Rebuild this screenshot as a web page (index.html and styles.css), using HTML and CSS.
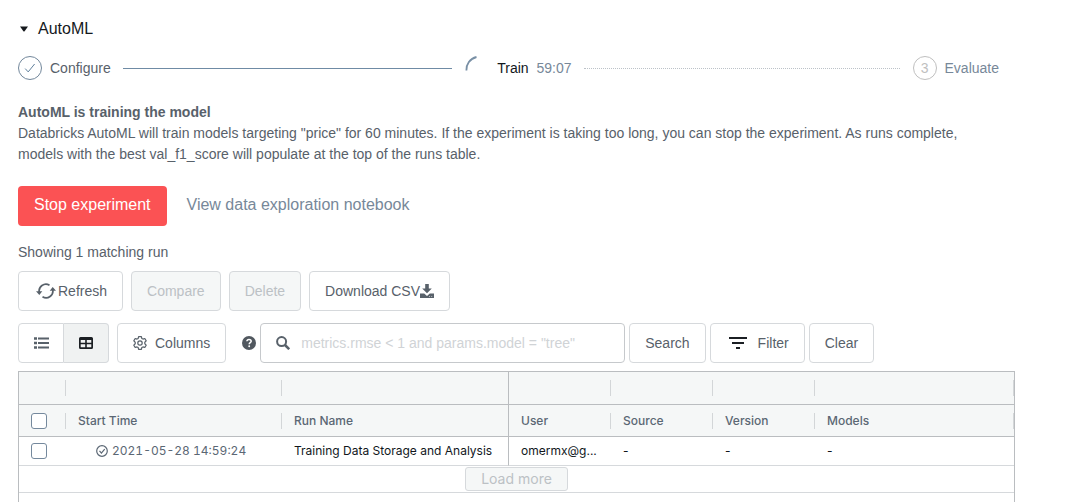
FILE: index.html
```html
<!DOCTYPE html>
<html lang="en">
<head>
<meta charset="utf-8">
<title>AutoML</title>
<link rel="stylesheet" href="styles.css">
</head>
<body>
<main class="page">
  <h1 class="title">
    <svg class="caret" viewBox="0 0 10 6" aria-hidden="true"><path d="M1 .5h8L5.6 5.2q-.6.7-1.2 0z" fill="currentColor"/></svg>
    AutoML
  </h1>

  <ol class="steps">
    <li class="step step-done">
      <span class="step-icon"><svg viewBox="0 0 12 12" width="12" height="12" aria-hidden="true"><path d="M1.200 6.600l3 3.300L10.600 2" fill="none" stroke="currentColor"/></svg></span>
      <span class="step-label">Configure</span>
    </li>
    <li class="step step-active">
      <svg class="spinner" viewBox="0 0 24 24" aria-hidden="true"><path d="M1.400 14.500C1 8.500 5 2.500 11.500 1" fill="none" stroke="currentColor" stroke-width="1.800"/></svg>
      <span class="step-label">Train <span class="time">59:07</span></span>
    </li>
    <li class="step step-wait">
      <span class="step-icon">3</span>
      <span class="step-label">Evaluate</span>
    </li>
  </ol>

  <section class="info">
    <h2 class="info-title">AutoML is training the model</h2>
    <p class="info-text">Databricks AutoML will train models targeting "price" for 60 minutes. If the experiment is taking too long, you can stop the experiment. As runs complete, models with the best val_f1_score will populate at the top of the runs table.</p>
  </section>

  <div class="actions">
    <button class="stop" type="button">Stop experiment</button>
    <a class="notebook" href="#">View data exploration notebook</a>
  </div>

  <p class="count">Showing 1 matching run</p>

  <div class="toolbar">
    <button class="btn btn-refresh" type="button"><svg width="20" height="16" viewBox="0 0 20 16" aria-hidden="true"><g fill="none" stroke="currentColor" stroke-width="1.700"><path d="M3.300 9.500A6.800 6.800 0 0 1 13.500 2.200"/><path d="M16.700 6.500A6.800 6.800 0 0 1 6.500 13.800"/></g><path d="M0 8.300h6.300L3.300 12zM13.700 7.700H20L16.700 4z" fill="currentColor"/></svg>Refresh</button>
    <button class="btn" type="button" disabled>Compare</button>
    <button class="btn" type="button" disabled>Delete</button>
    <button class="btn" type="button">Download CSV<svg width="14" height="14" viewBox="0 0 14 14" aria-hidden="true"><path d="M5.200 0h3.600v4.500h3L7 9.300 2.200 4.500h3zM0 9.500h4.200L7 12l2.800-2.500H14V14H0z" fill="currentColor"/><path d="M9 12.500h1M11.200 12.500h1" stroke="#fff" stroke-opacity=".7" stroke-width=".8"/></svg></button>
  </div>

  <div class="filters">
    <div class="views">
      <button class="view" type="button" aria-label="List view"><svg width="15" height="12" viewBox="0 0 15 12" aria-hidden="true"><path d="M0 1.500h3M0 6h3M0 10.500h3" stroke="currentColor" stroke-width="2.600"/><path d="M4 1.500h11M4 6h11M4 10.500h11" stroke="currentColor" stroke-width="1.800"/></svg></button>
      <button class="view view-on" type="button" aria-label="Grid view"><svg width="14" height="12" viewBox="0 0 14 12" aria-hidden="true"><path fill-rule="evenodd" d="M1.500 0h11A1.500 1.500 0 0 1 14 1.500v9a1.500 1.500 0 0 1-1.500 1.500h-11A1.500 1.500 0 0 1 0 10.500v-9A1.500 1.500 0 0 1 1.500 0zM1.700 3v2.800h4.500V3zM7.800 3v2.800h4.500V3zM1.700 7.300v2.900h4.500V7.300zM7.800 7.300v2.900h4.500V7.300z" fill="currentColor"/></svg></button>
    </div>
    <button class="btn btn-columns" type="button"><svg width="14" height="14" viewBox="0 0 14 14" aria-hidden="true" fill="none" stroke="currentColor" stroke-width="1.200" stroke-linejoin="round"><path d="M5.600.6h2.800l.4 1.800 1.200.7 1.800-.6 1.400 2.400-1.400 1.300v1.600l1.400 1.300-1.400 2.400-1.800-.6-1.200.7-.4 1.800H5.600l-.4-1.800-1.200-.7-1.800.6L.8 9.100l1.400-1.300V6.200L.8 4.900l1.400-2.400 1.800.6 1.200-.7z"/><circle cx="7" cy="7" r="2.200"/></svg>Columns</button>
    <svg class="help" viewBox="0 0 14 14" role="img" aria-label="Help"><circle cx="7" cy="7" r="7" fill="currentColor"/><path d="M4.900 5.300C5 3.900 6 3.400 7 3.400c1.300 0 2.200.7 2.200 1.800C9.200 6.600 7.200 6.600 7.200 8.200" fill="none" stroke="#fff" stroke-width="1.500"/><circle cx="7.200" cy="10.200" r=".95" fill="#fff"/></svg>
    <div class="search">
      <svg width="14" height="14" viewBox="0 0 14 14" aria-hidden="true"><circle cx="5.600" cy="5.600" r="4.500" fill="none" stroke="currentColor" stroke-width="2"/><path d="M9 9l4.200 4.200" stroke="currentColor" stroke-width="2.500"/></svg>
      <input class="search-input" type="text" aria-label="Search runs" placeholder='metrics.rmse &lt; 1 and params.model = "tree"'>
    </div>
    <button class="btn" type="button">Search</button>
    <button class="btn btn-filter" type="button"><svg width="18" height="12" viewBox="0 0 18 12" aria-hidden="true"><path d="M0 1h18M3 6h12M7 11h4" stroke="#1b1f23" stroke-width="2"/></svg>Filter</button>
    <button class="btn" type="button">Clear</button>
  </div>

  <div class="grid">
    <table class="runs">
      <colgroup><col class="c-check"><col class="c-time"><col class="c-name"><col class="c-meta"><col class="c-meta"><col class="c-meta"><col></colgroup>
      <thead>
        <tr class="groups"><th></th><th></th><th class="pinned"></th><th></th><th></th><th></th><th></th></tr>
        <tr class="heads"><th><input class="check" type="checkbox" aria-label="Select all runs"></th><th>Start Time</th><th class="pinned">Run Name</th><th>User</th><th>Source</th><th>Version</th><th>Models</th></tr>
      </thead>
      <tbody>
        <tr class="run">
          <td><input class="check" type="checkbox" aria-label="Select run"></td>
          <td><span class="start"><svg width="12" height="12" viewBox="0 0 12 12" aria-hidden="true" fill="none" stroke="currentColor" stroke-width="1.200"><circle cx="6" cy="6" r="5.300"/><path d="M3.500 5.900l1.900 2.200 3.300-4"/></svg>2021-05-28 14:59:24</span></td>
          <td class="pinned">Training Data Storage and Analysis</td>
          <td>omermx@g...</td><td>-</td><td>-</td><td>-</td>
        </tr>
        <tr class="more"><td colspan="7"><button class="load" type="button" disabled>Load more</button></td></tr>
      </tbody>
    </table>
  </div>
</main>
</body>
</html>
```
FILE: styles.css
```css
* { box-sizing: border-box; }

body {
  margin: 0;
  background: #fff;
  color: #58616a;
  font: 14px/21px "Liberation Sans", Arial, sans-serif;
}

button, input { font: inherit; color: inherit; }
h1, h2, p, ol { margin: 0; padding: 0; }
svg { flex: none; }

.page {
  display: flex;
  flex-direction: column;
  min-height: 100vh;
  padding: 17px 70px 0 18px;
}

.title {
  display: flex;
  align-items: center;
  gap: 9px;
  padding-left: 1px;
  color: #15191d;
  font-size: 16px;
  font-weight: 400;
  line-height: 24px;
}
.caret { width: 10px; height: 6px; }

.steps {
  display: flex;
  gap: 13px;
  margin-top: 15px;
  padding-right: 16px;
  list-style: none;
}
.step {
  display: flex;
  flex: 1;
  align-items: center;
  gap: 8px;
  line-height: 24px;
}
.step:last-child { flex: none; }
.step:not(:last-child)::after {
  content: "";
  flex: 1;
  margin-left: 4px;
  border-top: 1px solid #6f8ba5;
}
.step.step-active::after { border-top: 1px dotted #bcc2c8; }
.step-icon {
  display: flex;
  align-items: center;
  justify-content: center;
  width: 24px;
  height: 24px;
  border: 1px solid #72879b;
  border-radius: 50%;
  color: #5f7f9c;
}
.spinner { width: 24px; height: 24px; color: #788fa5; }
.step-active .step-label { color: #11171c; }
.step-active .time { margin-left: 4px; color: #778899; }
.step-wait { color: #778899; }
.step-wait .step-icon { border-color: #bfbfbf; color: #bfbfbf; }

.info { margin-top: 22px; }
.info-title { font-size: 14px; line-height: 21px; }
.info-text { max-width: 960px; }

.actions {
  display: flex;
  align-items: center;
  gap: 20px;
  margin-top: 21px;
  font-size: 16px;
}
.stop {
  height: 40px;
  padding: 0 16px 3px;
  border: 0;
  border-radius: 4px;
  background: #fb5254;
  color: #fff;
}
.notebook { padding-bottom: 3px; color: #778899; text-decoration: none; }

.count { margin-top: 16px; }

.toolbar, .filters { display: flex; align-items: center; }
.toolbar { gap: 8px; margin-top: 8px; }
.filters { gap: 4px; margin-top: 12px; }

.btn {
  display: flex;
  flex: none;
  align-items: center;
  height: 40px;
  padding: 0 15px;
  border: 1px solid #d6d9dc;
  border-radius: 4px;
  background: #fff;
}
.btn:disabled { background: #f5f7f7; color: #bcc1c5; }
.btn-refresh { gap: 2px; padding-left: 17px; }
.btn-columns { gap: 8px; margin: 0 12px 0 4px; }
.btn-filter { gap: 11px; padding-left: 18px; }

.views { display: flex; }
.view {
  display: flex;
  align-items: center;
  justify-content: center;
  width: 46px;
  height: 40px;
  padding: 0;
  border: 1px solid #d6d9dc;
  border-radius: 4px 0 0 4px;
  background: #fff;
}
.view-on {
  border-left: 0;
  width: 45px;
  border-radius: 0 4px 4px 0;
  background: #f0f2f2;
  color: #1b1f23;
}
.help { width: 14px; height: 14px; color: #51585f; }

.search {
  display: flex;
  flex: 0 1 365px;
  align-items: center;
  gap: 11px;
  height: 40px;
  padding: 0 15px;
  border: 1px solid #c6c9cc;
  border-radius: 4px;
}
.search-input {
  flex: 1;
  min-width: 0;
  padding: 0;
  border: 0;
  outline: 0;
  background: none;
}
.search-input::placeholder { color: #d0d3d6; opacity: 1; }

.grid {
  flex: 1;
  margin-top: 8px;
  border: 1px solid #babdc0;
  border-bottom: 0;
}
.runs {
  width: 100%;
  border-spacing: 0;
  table-layout: fixed;
  color: #11171c;
  font: 12px/16px Inter, "Liberation Sans", sans-serif;
}
.c-check { width: 47px; }
.c-time { width: 216px; }
.c-name { width: 227px; }
.c-meta { width: 102px; }

.runs th, .runs td {
  padding: 0 12px;
  text-align: left;
  white-space: nowrap;
}
.runs th {
  position: relative;
  border-bottom: 1px solid #babdc0;
  background: #f5f7f7;
  color: #5b6774;
  font-weight: 500;
}
.runs th:not(.pinned)::after {
  content: "";
  position: absolute;
  top: 8px;
  right: 0;
  width: 1px;
  height: 16px;
  background: #d3d6d8;
}
.runs .pinned { border-right: 1px solid #babdc0; }
.runs td { border-bottom: 1px solid #d6d9dc; }
.groups { height: 33px; }
.heads { height: 32px; }
.run { height: 29px; }
.runs .more td { height: 27px; text-align: center; }

.check {
  display: block;
  width: 16px;
  height: 16px;
  margin: 0;
  border: 1px solid #75899d;
  border-radius: 3px;
  background: #fff;
  appearance: none;
}
.start {
  display: flex;
  align-items: center;
  gap: 4px;
  padding-left: 18px;
  color: #5b6774;
  font-variant-numeric: tabular-nums;
}
.load {
  display: block;
  height: 24px;
  margin: 0 auto;
  padding: 0 15px;
  border: 1px solid #d6d9dc;
  border-radius: 3px;
  background: #f5f7f7;
  color: #bcc1c5;
  font-size: 14px;
}
```
